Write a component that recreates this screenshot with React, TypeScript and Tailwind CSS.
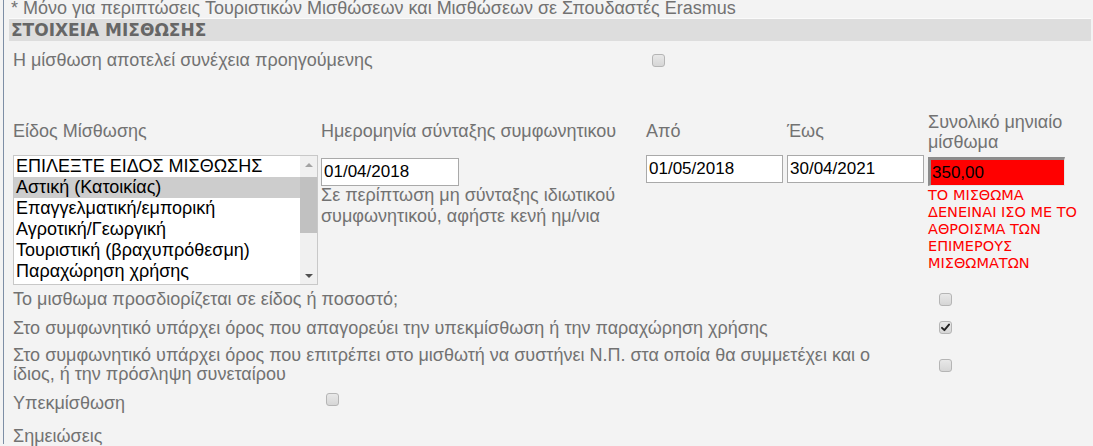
import React from "react";

const Checkbox = ({ checked = false }: { checked?: boolean }) => (
  <div className="w-[13px] h-[13px] rounded-[3px] border border-[#b5b5b5] bg-gradient-to-b from-[#e8e8e8] to-[#d6d6d6] flex items-center justify-center shrink-0">
    {checked && (
      <svg width="9" height="9" viewBox="0 0 9 9">
        <path d="M1 4.8 L3.4 7.2 L8 1.6" stroke="#222" strokeWidth="1.9" fill="none" strokeLinecap="round" strokeLinejoin="round" />
      </svg>
    )}
  </div>
);

const DateInput = ({ value, w }: { value: string; w: string }) => (
  <div className={`${w} h-[28px] bg-white border border-[#a9a9a9] flex items-center pl-[2px] text-black text-[17px]`}>
    {value}
  </div>
);

export default function App() {
  const items = [
    "ΕΠΙΛΕΞΤΕ ΕΙΔΟΣ ΜΙΣΘΩΣΗΣ",
    "Αστική (Κατοικίας)",
    "Επαγγελματική/εμπορική",
    "Αγροτική/Γεωργική",
    "Τουριστική (βραχυπρόθεσμη)",
    "Παραχώρηση χρήσης",
  ];
  return (
    <div
      className="w-[1093px] h-[446px] overflow-hidden bg-[#f3f3f3] text-[#727272] text-[18px] leading-[20px]"
      style={{ fontFamily: '"Liberation Sans", Arial, sans-serif' }}
    >
      <div className="ml-[3px] h-full border-l border-[#7d8ea5] pl-[5px] pr-[2px]">
        <div className="pl-[2px] mt-[-2px] h-[21px] border-b border-[#fafafa] whitespace-nowrap">
          * Μόνο για περιπτώσεις Τουριστικών Μισθώσεων και Μισθώσεων σε Σπουδαστές Erasmus
        </div>
        <div
          className="h-[22px] bg-[#dddddd] flex items-center pl-[2px] text-[#666666] font-bold text-[17px]"
          style={{ fontFamily: '"DejaVu Sans", Verdana, sans-serif' }}
        >
          ΣΤΟΙΧΕΙΑ ΜΙΣΘΩΣΗΣ
        </div>
        <div className="flex items-center h-[38px] pl-[4px]">
          <div className="w-[639px]">Η μίσθωση αποτελεί συνέχεια προηγούμενης</div>
          <Checkbox />
        </div>

        <div className="flex mt-[21px] pl-[4px]">
          {/* col 1 */}
          <div className="w-[308px] shrink-0">
            <div className="h-[55px] flex items-end pb-[13px] leading-[21px]">Είδος Μίσθωσης</div>
            <div className="w-[305px] h-[130px] bg-white border border-[#c8c8c8] flex text-black">
              <div className="flex-1">
                {items.map((it, i) => (
                  <div
                    key={it}
                    className={`h-[21px] leading-[21px] pl-[2px] whitespace-nowrap ${i === 1 ? "bg-[#cdcdcd]" : ""}`}
                  >
                    {it}
                  </div>
                ))}
              </div>
              <div className="w-[17px] bg-[#f0f0f0] flex flex-col items-center">
                <div className="h-[17px] flex items-center justify-center">
                  <div className="w-0 h-0 border-l-[4px] border-r-[4px] border-b-[4px] border-l-transparent border-r-transparent border-b-[#a3a3a3]" />
                </div>
                <div className="w-[17px] h-[56px] bg-[#c1c1c1] mt-[4px]" />
                <div className="flex-1" />
                <div className="h-[17px] flex items-center justify-center">
                  <div className="w-0 h-0 border-l-[4px] border-r-[4px] border-t-[4px] border-l-transparent border-r-transparent border-t-[#505050]" />
                </div>
              </div>
            </div>
          </div>
          {/* col 2 */}
          <div className="w-[325px] shrink-0">
            <div className="h-[55px] flex items-end pb-[13px] leading-[21px] whitespace-nowrap">
              Ημερομηνία σύνταξης συμφωνητικου
            </div>
            <div className="mt-[3px]">
              <DateInput value="01/04/2018" w="w-[138px]" />
            </div>
            <div className="mt-[-1px] leading-[21px] whitespace-nowrap">
              Σε περίπτωση μη σύνταξης ιδιωτικού
              <br />
              συμφωνητικού, αφήστε κενή ημ/νια
            </div>
          </div>
          {/* col 3 */}
          <div className="w-[141px] shrink-0">
            <div className="h-[55px] flex items-end pb-[13px] leading-[21px]">Από</div>
            <DateInput value="01/05/2018" w="w-[137px]" />
          </div>
          {/* col 4 */}
          <div className="w-[141px] shrink-0">
            <div className="h-[55px] flex items-end pb-[13px] leading-[21px]">Έως</div>
            <DateInput value="30/04/2021" w="w-[137px]" />
          </div>
          {/* col 5 */}
          <div className="w-[160px] shrink-0">
            <div className="h-[55px] flex items-end pb-[3px] leading-[20px] whitespace-nowrap">
              Συνολικό μηνιαίο
              <br />
              μίσθωμα
            </div>
            <div className="mt-[2px] w-[137px] h-[29px] bg-[#ff0000] border-t-[3px] border-l-[3px] border-r border-b border-t-[#8c8c8c] border-l-[#8c8c8c] border-r-[#e6e6e6] border-b-[#e6e6e6] flex items-center text-black text-[17px] pl-[1px]">
              350,00
            </div>
            <div
              className="mt-[1px] text-[#ff0000] text-[14.5px] leading-[17px] whitespace-nowrap"
              style={{ fontFamily: '"DejaVu Sans", Verdana, sans-serif' }}
            >
              ΤΟ ΜΙΣΘΩΜΑ
              <br />
              ΔΕΝΕΙΝΑΙ ΙΣΟ ΜΕ ΤΟ
              <br />
              ΑΘΡΟΙΣΜΑ ΤΩΝ
              <br />
              ΕΠΙΜΕΡΟΥΣ
              <br />
              ΜΙΣΘΩΜΑΤΩΝ
            </div>
          </div>
        </div>

        <div className="pl-[4px]">
          <div className="flex items-center h-[28px]">
            <div className="w-[926px] whitespace-nowrap">Το μισθωμα προσδιορίζεται σε είδος ή ποσοστό;</div>
            <Checkbox />
          </div>
          <div className="flex items-center h-[29px]">
            <div className="w-[926px] whitespace-nowrap">
              Στο συμφωνητικό υπάρχει όρος που απαγορεύει την υπεκμίσθωση ή την παραχώρηση χρήσης
            </div>
            <Checkbox checked />
          </div>
          <div className="flex items-center h-[46px]">
            <div className="w-[926px] leading-[19px] whitespace-nowrap">
              Στο συμφωνητικό υπάρχει όρος που επιτρέπει στο μισθωτή να συστήνει Ν.Π. στα οποία θα συμμετέχει και ο
              <br />
              ίδιος, ή την πρόσληψη συνεταίρου
            </div>
            <Checkbox />
          </div>
          <div className="flex items-start h-[30px]">
            <div className="w-[313px] mt-[5px]">Υπεκμίσθωση</div>
            <div className="mt-[5px]">
              <Checkbox />
            </div>
          </div>
          <div className="mt-[8px] leading-[20px]">Σημειώσεις</div>
        </div>
      </div>
    </div>
  );
}
